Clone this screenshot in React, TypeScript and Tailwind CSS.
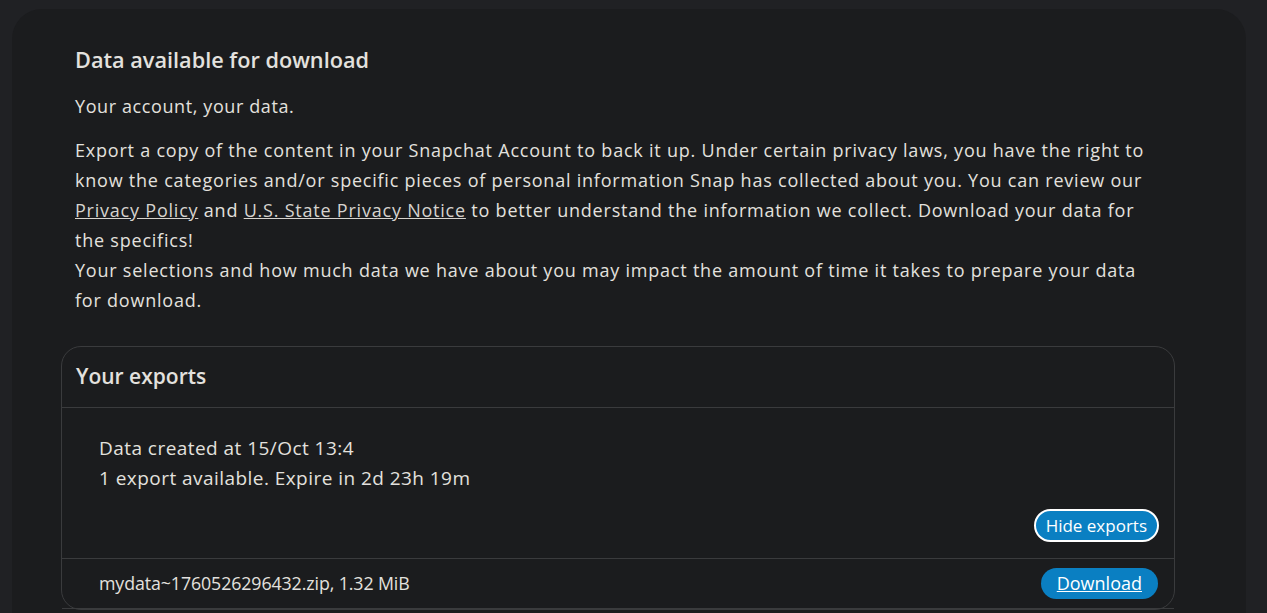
import React from "react";

export default function App() {
  const main = { fontFamily: "'Open Sans', 'Noto Sans', sans-serif" };
  const sys = { fontFamily: "'Open Sans', 'Noto Sans', sans-serif" };
  return (
    <div className="min-h-screen bg-[#202124] pt-[9px] pl-[12px] pr-[21px]" style={main}>
      <div className="bg-[#1b1c1e] rounded-[30px] px-[49px] pt-[36px] pb-[40px] text-[#e3e1de]">
        <div className="px-[14px]">
          <h2 className="text-[21.7px] leading-[30px] font-semibold">Data available for download</h2>
          <p className="mt-[16px] text-[18px] leading-[30px] tracking-[0.6px]">Your account, your data.</p>
          <p className="mt-[14px] w-[1080px] text-[18px] leading-[30px] tracking-[0.78px]">
            Export a copy of the content in your Snapchat Account to back it up. Under certain privacy laws, you have the right to know the categories and/or specific pieces of personal information Snap has collected about you. You can review our{" "}
            <a className="underline text-[#d6d3ce]" href="#">Privacy Policy</a> and{" "}
            <a className="underline text-[#d6d3ce]" href="#">U.S. State Privacy Notice</a> to better understand the information we collect. Download your data for the specifics!
            <br />
            Your selections and how much data we have about you may impact the amount of time it takes to prepare your data for download.
          </p>
        </div>
        <div className="mt-[31px] w-[1114px] border border-[#3a3b3d] rounded-[20px]">
          <div className="h-[61px] flex items-center px-[14px] border-b border-[#3a3b3d]">
            <h3 className="text-[21px] font-semibold">Your exports</h3>
          </div>
          <div className="pt-[25px] pl-[37px] pr-[15px] pb-[16px]">
            <div className="text-[19px] leading-[30px] tracking-[0.45px]">Data created at 15/Oct 13:4</div>
            <div className="text-[19px] leading-[30px] tracking-[0.45px]">1 export available. Expire in 2d 23h 19m</div>
            <div className="flex justify-end mt-[16px]">
              <button className="h-[33px] px-[10px] rounded-full bg-[#0a7fc2] border-2 border-white text-white text-[17px]" style={sys}>Hide exports</button>
            </div>
          </div>
          <div className="h-[51px] flex items-center justify-between border-t border-b border-[#3a3b3d] pl-[37px] pr-[16px]" style={sys}>
            <span className="text-[17.8px] tracking-[-0.1px]">mydata~1760526296432.zip, 1.32 MiB</span>
            <button className="h-[31px] px-[16px] rounded-full bg-[#0a7fc2] text-white text-[18px] underline" style={sys}>Download</button>
          </div>
        </div>
      </div>
    </div>
  );
}
